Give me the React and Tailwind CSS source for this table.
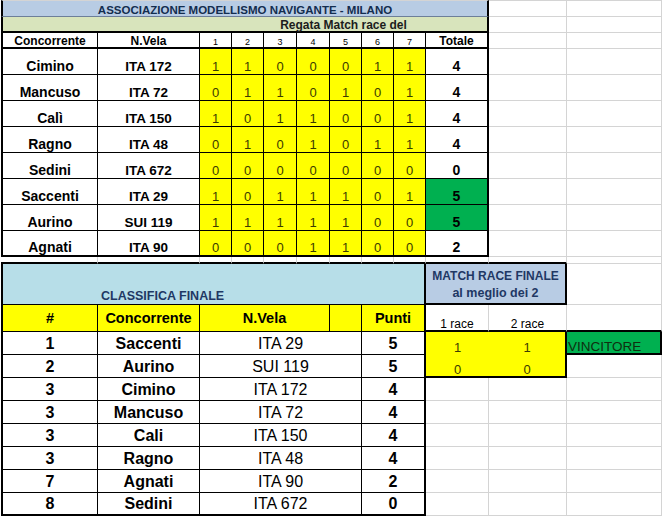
const regata = [
  { nome: "Cimino", vela: "ITA 172", prove: [1, 1, 0, 0, 0, 1, 1], totale: 4 },
  { nome: "Mancuso", vela: "ITA 72", prove: [0, 1, 1, 0, 1, 0, 1], totale: 4 },
  { nome: "Calì", vela: "ITA 150", prove: [1, 0, 1, 1, 0, 0, 1], totale: 4 },
  { nome: "Ragno", vela: "ITA 48", prove: [0, 1, 0, 1, 0, 1, 1], totale: 4 },
  { nome: "Sedini", vela: "ITA 672", prove: [0, 0, 0, 0, 0, 0, 0], totale: 0 },
  { nome: "Saccenti", vela: "ITA 29", prove: [1, 0, 1, 1, 1, 0, 1], totale: 5, finale: true },
  { nome: "Aurino", vela: "SUI 119", prove: [1, 1, 1, 1, 1, 0, 0], totale: 5, finale: true },
  { nome: "Agnati", vela: "ITA 90", prove: [0, 0, 0, 1, 1, 0, 0], totale: 2 },
];

const classifica = [
  { pos: 1, nome: "Saccenti", vela: "ITA 29", punti: 5 },
  { pos: 2, nome: "Aurino", vela: "SUI 119", punti: 5 },
  { pos: 3, nome: "Cimino", vela: "ITA 172", punti: 4 },
  { pos: 3, nome: "Mancuso", vela: "ITA 72", punti: 4 },
  { pos: 3, nome: "Cali", vela: "ITA 150", punti: 4 },
  { pos: 3, nome: "Ragno", vela: "ITA 48", punti: 4 },
  { pos: 7, nome: "Agnati", vela: "ITA 90", punti: 2 },
  { pos: 8, nome: "Sedini", vela: "ITA 672", punti: 0 },
];

// empty spreadsheet cell, only the light gridlines
function Gray() {
  return <div className="border-r border-b border-[#d4d4d4]" />;
}

function MatchCells({ idx }) {
  if (idx === 0) {
    return (
      <>
        <div className="flex items-end justify-center pb-px bg-[#ffff00] text-[13px] leading-none text-[#3b3b00]">1</div>
        <div className="flex items-end justify-center pb-px bg-[#ffff00] border-r-2 border-black text-[13px] leading-none text-[#3b3b00]">1</div>
        <div className="flex items-end pl-px bg-[#00b050] border-r-2 border-b-2 border-black text-[13.5px] leading-none text-[#0f2f0f]">VINCITORE</div>
      </>
    );
  }
  if (idx === 1) {
    return (
      <>
        <div className="flex items-end justify-center bg-[#ffff00] border-b-2 border-black text-[13px] leading-none text-[#3b3b00]">0</div>
        <div className="flex items-end justify-center bg-[#ffff00] border-r-2 border-b-2 border-black text-[13px] leading-none text-[#3b3b00]">0</div>
        <Gray />
      </>
    );
  }
  return (
    <>
      <Gray />
      <Gray />
      <Gray />
    </>
  );
}

export default function App() {
  return (
    <div className="w-[662px] h-[518px] overflow-hidden bg-white text-black font-['Liberation_Sans',Arial,sans-serif]">
      <div className="ml-px grid grid-cols-[97px_102px_32px_32px_33px_33px_32px_32px_32px_63px_78px_95px] grid-rows-[17px_16px_16px_26px_26px_26px_26px_26px_26px_26px_26px_7px_41px_27px_23px_23px_23px_23px_23px_23px_23px_23px]">
        {/* titolo */}
        <div className="col-span-10 flex items-end justify-center bg-[#b8cce4] border-t border-t-[#d4d4d4] border-l-2 border-l-black border-r-2 border-r-black border-b border-b-[#6d7f99] text-[11.5px] font-bold leading-none text-[#132d4f]">
          ASSOCIAZIONE MODELLISMO NAVIGANTE - MILANO
        </div>
        <div className="border-t border-r border-b border-[#d4d4d4]" />
        <div className="border-t border-r border-b border-[#d4d4d4]" />

        <div className="col-span-2 bg-[#d8e4bc] border-l-2 border-b-2 border-black" />
        <div className="col-span-8 flex items-end justify-center bg-[#d8e4bc] border-r-2 border-b-2 border-black text-[12px] font-bold leading-none text-[#1c1c1c]">
          Regata Match race del
        </div>
        <Gray />
        <Gray />

        {/* intestazione */}
        <div className="flex items-end justify-center border-l-2 border-r border-b-2 border-black text-[12px] font-bold leading-none">Concorrente</div>
        <div className="flex items-end justify-center border-r border-b-2 border-black text-[12px] font-bold leading-none">N.Vela</div>
        {[1, 2, 3, 4, 5, 6, 7].map((n) => (
          <div key={n} className="flex items-end justify-center border-r border-b-2 border-black text-[9px] leading-none">{n}</div>
        ))}
        <div className="flex items-end justify-center border-r-2 border-b-2 border-black text-[12px] font-bold leading-none">Totale</div>
        <Gray />
        <Gray />

        {regata.map((r, i) => {
          const last = i === regata.length - 1;
          return (
            <div key={r.nome} className="contents">
              <div className={`flex items-end justify-center pb-px border-l-2 border-r border-black text-[14px] font-bold leading-none ${last ? "border-b-2" : "border-b"}`}>{r.nome}</div>
              <div className={`flex items-end justify-center pb-px border-r border-black text-[13.5px] font-bold leading-none ${last ? "border-b-2" : "border-b"}`}>{r.vela}</div>
              {r.prove.map((p, j) => (
                <div key={j} className={`flex items-end justify-center pb-px bg-[#ffff00] border-r border-black text-[13px] leading-none text-[#3b3b00] ${last ? "border-b-2" : "border-b"}`}>{p}</div>
              ))}
              <div className={`flex items-end justify-center pb-px border-r-2 border-black text-[14px] font-bold leading-none ${last ? "border-b-2" : "border-b"} ${r.finale ? "bg-[#00b050]" : "bg-white"}`}>{r.totale}</div>
              <Gray />
              <Gray />
            </div>
          );
        })}

        {/* riga vuota */}
        {[0, 1, 2, 3, 4, 5, 6, 7, 8, 9, 10].map((k) => (
          <div key={k} className="border-r border-r-[#d4d4d4] border-b-2 border-b-black" />
        ))}
        <Gray />

        {/* classifica finale */}
        <div className="bg-[#b7dee8] border-l-2 border-l-black border-b border-b-black" />
        <div className="col-span-8 flex items-end pl-[3px] pb-[2px] bg-[#b7dee8] border-r-2 border-r-black border-b border-b-black text-[12.5px] font-bold leading-none text-[#1f3864]">
          CLASSIFICA FINALE
        </div>
        <div className="col-span-2 flex flex-col items-center justify-end pb-px bg-[#b8cce4] border-r-2 border-b-2 border-black font-bold leading-[17px] text-[#1f3864]">
          <span className="text-[12px]">MATCH RACE FINALE</span>
          <span className="text-[12.5px]">al meglio dei 2</span>
        </div>
        <Gray />

        <div className="flex items-center justify-center bg-[#ffff00] border-l-2 border-r border-b border-black text-[14.5px] font-bold leading-none">#</div>
        <div className="flex items-center justify-center bg-[#ffff00] border-r border-b border-black text-[14.5px] font-bold leading-none">Concorrente</div>
        <div className="col-span-4 flex items-center justify-center bg-[#ffff00] border-r border-b border-black text-[14.5px] font-bold leading-none">N.Vela</div>
        <div className="bg-[#ffff00] border-r border-b border-black" />
        <div className="col-span-2 flex items-center justify-center bg-[#ffff00] border-r-2 border-b border-black text-[14.5px] font-bold leading-none">Punti</div>
        <div className="flex items-end justify-center border-r border-r-[#d4d4d4] border-b-2 border-b-black text-[12px] leading-none">1 race</div>
        <div className="flex items-end justify-center border-r border-r-[#d4d4d4] border-b-2 border-b-black text-[12px] leading-none">2 race</div>
        <div className="border-r border-r-[#d4d4d4] border-b-2 border-b-black" />

        {classifica.map((c, i) => {
          const last = i === classifica.length - 1;
          return (
            <div key={c.nome} className="contents">
              <div className={`flex items-end justify-center pb-[2px] border-l-2 border-r border-black text-[16px] font-bold leading-none ${last ? "border-b-2" : "border-b"}`}>{c.pos}</div>
              <div className={`flex items-end justify-center pb-[2px] border-r border-black text-[16px] font-bold leading-none ${last ? "border-b-2" : "border-b"}`}>{c.nome}</div>
              <div className={`col-span-5 flex items-end justify-center pb-[2px] border-r border-black text-[16px] leading-none ${last ? "border-b-2" : "border-b"}`}>{c.vela}</div>
              <div className={`col-span-2 flex items-end justify-center pb-[2px] border-r-2 border-black text-[16px] font-bold leading-none ${last ? "border-b-2" : "border-b"}`}>{c.punti}</div>
              <MatchCells idx={i} />
            </div>
          );
        })}
      </div>
    </div>
  );
}
